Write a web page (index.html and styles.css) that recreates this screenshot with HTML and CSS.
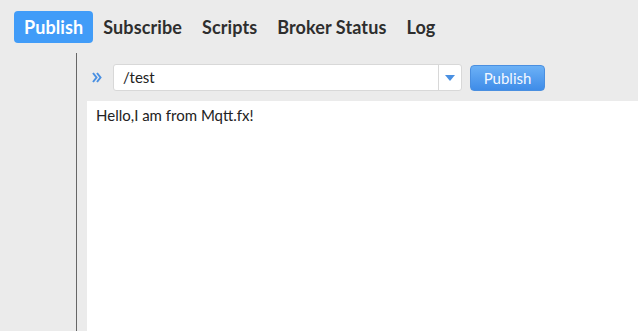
FILE: index.html
```html
<!DOCTYPE html>
<html lang="en">
<head>
  <meta charset="UTF-8" />
  <title>Mqtt.fx Publish</title>
  <link rel="stylesheet" href="styles.css">
</head>
<body>
  <nav class="tabs">
    <span class="tab active">Publish</span>
    <span class="tab">Subscribe</span>
    <span class="tab">Scripts</span>
    <span class="tab">Broker Status</span>
    <span class="tab">Log</span>
  </nav>

  <div class="main">
    <div class="side"></div>
    <div class="content">
      <div class="toolbar">
        <span class="expand">
          <svg width="10" height="11" viewBox="0 0 10 11"><path d="M1 1 L4.5 5.5 L1 10 M5 1 L8.5 5.5 L5 10" fill="none" stroke="#4a90e2" stroke-width="2"/></svg>
        </span>
        <div class="combo">
          <span class="combo-value">/test</span>
          <span class="combo-arrow">
            <svg width="10" height="6" viewBox="0 0 10 6"><path d="M0 0 H10 L5 6 Z" fill="#4a90e2"/></svg>
          </span>
        </div>
        <button class="button">Publish</button>
      </div>
      <div class="message">Hello,I am from Mqtt.fx!</div>
    </div>
  </div>
</body>
</html>
```

FILE: styles.css
```css
html, body {
  height: 100%;
}
body {
  margin: 0;
  font-family: Lato, 'Liberation Sans', sans-serif;
  background: #ebebeb;
  color: #2b2b2b;
  display: flex;
  flex-direction: column;
  overflow: hidden;
}
.tabs {
  display: flex;
  padding: 11px 0 0 14px;
  height: 32px;
}
.tab {
  padding: 0 10px;
  line-height: 32px;
  font-size: 18px;
  font-weight: 700;
  letter-spacing: 0.1px;
  color: #2e2e2e;
  border-radius: 4px;
}
.tab.active {
  background: #419cf8;
  color: white;
}
.main {
  flex: 1;
  display: flex;
  margin-top: 10px;
}
.side {
  width: 76px;
  border-right: 1px solid #666;
}
.content {
  flex: 1;
  display: flex;
  flex-direction: column;
  padding: 11px 0 0 10px;
}
.toolbar {
  display: flex;
  align-items: center;
  height: 27px;
  padding-left: 5px;
  margin-bottom: 10px;
}
.expand {
  width: 21px;
  display: flex;
  align-items: center;
}
.combo {
  display: flex;
  width: 347px;
  height: 25px;
  background: white;
  border: 1px solid #d8d8d8;
  border-radius: 3px;
}
.combo-value {
  flex: 1;
  padding-left: 9px;
  font-size: 15px;
  line-height: 25px;
  color: #222;
}
.combo-arrow {
  width: 22px;
  border-left: 1px solid #d8d8d8;
  display: flex;
  align-items: center;
  justify-content: center;
}
.button {
  margin-left: 8px;
  width: 75px;
  height: 26px;
  border: 1px solid #4a8fe0;
  border-radius: 4px;
  background: linear-gradient(#6cb1f6, #3f8ce8);
  color: #f4f8ff;
  font-family: inherit;
  font-size: 15px;
  padding: 0;
}
.message {
  flex: 1;
  background: white;
  padding: 5px 9px;
  font-size: 15px;
  color: #222;
}
```
